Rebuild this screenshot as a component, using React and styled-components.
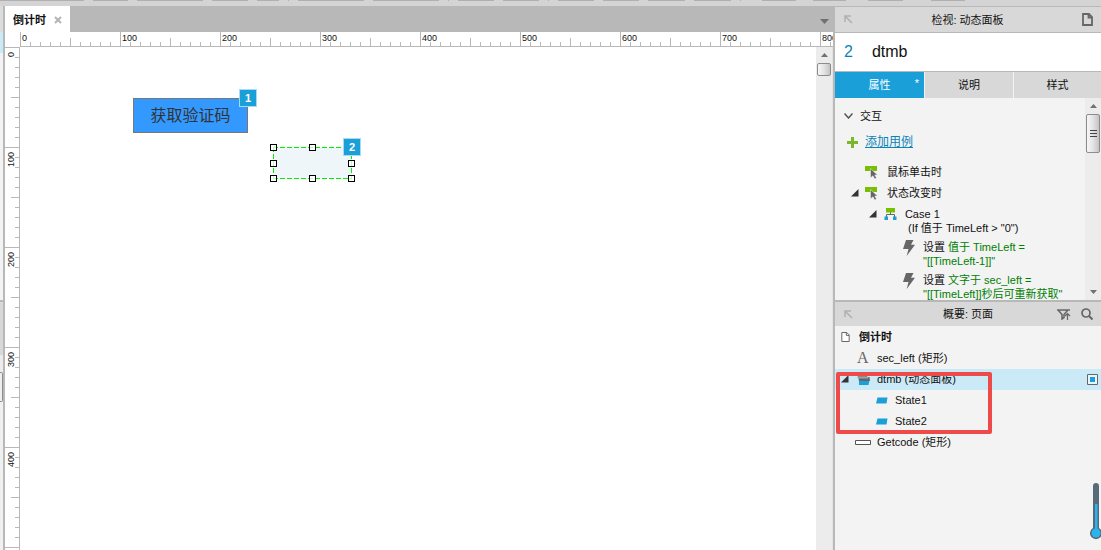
import React, { useEffect, useState } from 'react';
import styled, { createGlobalStyle, css } from 'styled-components';

const line = '#b8b8b8';
const blue = '#1b9fd9';

const Global = createGlobalStyle`
  * { box-sizing: border-box; }
  body {
    margin: 0;
    background: #f3f3f3;
    color: #111;
    font: 11px/14px "Liberation Sans", "Noto Sans CJK SC", sans-serif;
  }
  button, input { font: inherit; color: inherit; }
  svg { display: block; flex: none; }
`;

const Page = styled.div`
  display: flex;
  flex-direction: column;
  height: 100vh;
  overflow: hidden;
`;

const ToolStrip = styled.div`
  display: flex;
  flex: none;
  gap: 9px;
  height: 6px;
  background: #d4d4d4;
  overflow: hidden;
`;

const ToolEdge = styled.span`
  flex: none;
  width: ${(p) => p.$w}px;
  height: 1px;
  margin-left: ${(p) => p.$space || 0}px;
  background: #b0b0b0;
`;

const Workspace = styled.div`
  display: flex;
  flex: 1;
  min-height: 0;
`;

const LeftDock = styled.aside`
  display: flex;
  flex-direction: column;
  flex: none;
  width: 5px;
  border-right: 2px solid ${line};
  background: #f0f0f0;
`;

const DockPart = styled.div`
  flex: none;
  height: ${(p) => p.$h}px;
  background: ${(p) => p.$bg};
`;

const DockThumb = styled.div`
  height: 30px;
  border: 1px solid #8c8c8c;
  border-left: 0;
  border-radius: 0 2px 2px 0;
  background: #eee;
`;

const Editor = styled.main`
  display: flex;
  flex-direction: column;
  flex: 1;
  min-width: 0;
  background: #fff;
`;

const TabBar = styled.div`
  display: flex;
  justify-content: space-between;
  align-items: stretch;
  flex: none;
  height: 26px;
  background: ${line};
`;

const FileTab = styled.div`
  display: flex;
  align-items: center;
  gap: 8px;
  padding: 2px 8px 0 8px;
  background: #fff;
  font-weight: bold;
`;

const IconButton = styled.button`
  display: inline-flex;
  align-items: center;
  justify-content: center;
  padding: 0;
  border: 0;
  background: none;
  color: #666;
`;

const TabMenu = styled(IconButton)`
  width: 16px;
  padding-top: 4px;
  margin-right: 1px;
`;

const TopRuler = styled.div`
  display: flex;
  flex: none;
  height: 15px;
  margin-left: 15px;
  overflow: hidden;
  border-bottom: 1px solid ${line};
  background:
    linear-gradient(90deg, ${line} 1px, transparent 1px) 0 0 / 100px 14px repeat-x,
    linear-gradient(90deg, ${line} 1px, transparent 1px) 0 6px / 50px 8px repeat-x,
    linear-gradient(90deg, ${line} 1px, transparent 1px) 0 10px / 10px 4px repeat-x;
`;

const SideRuler = styled.div`
  display: flex;
  flex-direction: column;
  flex: none;
  width: 15px;
  overflow: hidden;
  border-right: 1px solid ${line};
  background:
    linear-gradient(${line} 1px, transparent 1px) 0 0 / 14px 100px repeat-y,
    linear-gradient(${line} 1px, transparent 1px) 6px 0 / 8px 50px repeat-y,
    linear-gradient(${line} 1px, transparent 1px) 10px 0 / 4px 10px repeat-y;
`;

const RulerMark = styled.span`
  flex: none;
  font-size: 9px;
  line-height: 10px;
  ${(p) => p.$side
    ? css`
        height: 100px;
        width: 10px;
        margin-left: 1px;
        padding-bottom: 5px;
        writing-mode: vertical-rl;
        transform: rotate(180deg);
        text-align: right;
      `
    : css`
        width: 100px;
        padding: 1px 0 0 2px;
      `}
`;

const CanvasRow = styled.div`
  display: flex;
  flex: 1;
  min-height: 0;
  border-right: 1px solid #e4e4e4;
`;

const Canvas = styled.div`
  position: relative;
  flex: 1;
  min-width: 0;
  overflow: hidden;
`;

const CodeButton = styled.button`
  position: absolute;
  left: 113px;
  top: 51px;
  width: 115px;
  height: 35px;
  padding: 1px 0 0;
  border: 1px solid #777;
  background: #3399ff;
  color: #333;
  font-size: 16px;
`;

const dash = '#00f000 0 5px, transparent 5px 7px';

const PanelWidget = styled.div`
  position: absolute;
  left: 253px;
  top: 100px;
  width: 79px;
  height: 32px;
  background:
    repeating-linear-gradient(90deg, ${dash}) 0 0 / 100% 1px no-repeat,
    repeating-linear-gradient(90deg, ${dash}) 0 100% / 100% 1px no-repeat,
    repeating-linear-gradient(${dash}) 0 0 / 1px 100% no-repeat,
    repeating-linear-gradient(${dash}) 100% 0 / 1px 100% no-repeat,
    #eff6f9;
`;

const Handles = styled.div`
  display: grid;
  grid-template-columns: repeat(3, 7px);
  justify-content: space-between;
  align-content: space-between;
  width: 85px;
  height: 38px;
  margin: -3px;
`;

const Handle = styled.i`
  height: 7px;
  visibility: ${(p) => (p.$hidden ? 'hidden' : 'visible')};
  border: 1px solid #000;
  background: rgba(255, 255, 255, 0.75);
`;

const Badge = styled.span`
  position: absolute;
  left: ${(p) => p.$x}px;
  top: ${(p) => p.$y}px;
  width: 18px;
  height: 18px;
  border: 1px solid #a5dcf2;
  background: ${blue};
  color: #fff;
  font-weight: bold;
  line-height: 16px;
  text-align: center;
`;

const ScrollTrack = styled.div`
  display: flex;
  flex-direction: column;
  align-items: center;
  flex: none;
  width: 16px;
  padding: 6px 0;
  background: #ececec;
  color: #777;
`;

const ScrollThumb = styled.div`
  display: flex;
  align-items: center;
  justify-content: center;
  width: 14px;
  height: ${(p) => p.$h}px;
  margin: 6px 0 auto;
  border: 1px solid #8c8c8c;
  border-radius: 2px;
  background: linear-gradient(90deg, #f6f6f6, #e6e6e6 45%, #c4c4c8);
`;

const Dock = styled.aside`
  display: flex;
  flex-direction: column;
  flex: none;
  width: 268px;
  border-left: 2px solid ${line};
  border-top: 1px solid ${line};
`;

const PaneHeader = styled.header`
  display: flex;
  align-items: center;
  flex: none;
  gap: 10px;
  height: ${(p) => p.$h}px;
  padding: 0 8px 0 9px;
  background: #d8d8d8;
  color: #b0b0b0;
`;

const PaneTitle = styled.h2`
  flex: 1;
  margin: 0;
  padding-left: ${(p) => p.$pad}px;
  color: #111;
  font-size: 11px;
  font-weight: normal;
  text-align: center;
`;

const NameRow = styled.label`
  display: flex;
  align-items: center;
  flex: none;
  gap: 19px;
  height: 40px;
  padding-left: 9px;
  border-top: 1px solid ${line};
  border-bottom: 1px solid ${line};
  background: #fff;
  color: #0a84b8;
  font-size: 16px;
`;

const NameInput = styled.input`
  flex: 1;
  min-width: 0;
  padding: 0;
  border: 0;
  outline: 0;
  background: none;
  color: #111;
`;

const Tabs = styled.div`
  display: grid;
  grid-template-columns: 89fr 88fr 87fr;
  gap: 1px;
  flex: none;
  height: 26px;
`;

const Tab = styled.button`
  position: relative;
  padding: 0;
  border: 0;
  background: ${(p) => (p.$on ? blue : '#d8d8d8')};
  color: ${(p) => (p.$on ? '#fff' : '#111')};
`;

const Star = styled.span`
  position: absolute;
  right: 5px;
  top: 4px;
`;

const InspectorBody = styled.div`
  display: flex;
  flex: none;
  height: 202px;
`;

const CaseList = styled.div`
  flex: 1;
  min-width: 0;
  overflow: hidden;
  padding-top: 8px;
`;

const Line = styled.div`
  display: flex;
  align-items: center;
  gap: ${(p) => p.$gap}px;
  height: 21px;
  padding: 0 0 1px ${(p) => p.$in}px;
  white-space: nowrap;
`;

const AddRow = styled(Line)`
  margin: 5px 0 9px;
`;

const AddLink = styled.a`
  color: #0a84b8;
  font-size: 12px;
  text-decoration: underline;
`;

const Condition = styled.div`
  padding-left: 73px;
  margin: -4px 0 5px;
`;

const Action = styled.div`
  display: flex;
  gap: 8px;
  padding-left: 68px;
  margin-bottom: 5px;
  white-space: nowrap;
`;

const ActionText = styled.div`
  color: #008000;
  b { color: #111; font-weight: normal; }
`;

const Tree = styled.ul`
  position: relative;
  flex: 1;
  margin: 0;
  padding: 1px 0 0;
  list-style: none;
`;

const TreeRow = styled.li`
  display: flex;
  align-items: center;
  gap: ${(p) => p.$gap || 7}px;
  height: 21px;
  padding: 0 3px 1px ${(p) => p.$in}px;
  background: ${(p) => (p.$on ? '#cbeaf7' : 'transparent')};
  font-weight: ${(p) => (p.$bold ? 'bold' : 'normal')};
`;

const LetterIcon = styled.span`
  width: 12px;
  color: #666;
  font: 16px/16px "Liberation Serif", serif;
`;

const Grow = styled.span`
  flex: 1;
`;

const Highlight = styled.div`
  position: absolute;
  left: 1px;
  top: 46px;
  width: 156px;
  height: 62px;
  border: 4px solid #ee4a4a;
  border-radius: 2px;
`;

const Thermo = styled.div`
  position: fixed;
  right: -1px;
  bottom: 10px;
`;

const ArrowNW = () => (
  <svg width="9" height="9" viewBox="0 0 9 9" fill="none" stroke="#b0b0b0" strokeWidth="1.5">
    <path d="M1 7V1h6M1.5 1.5L8 8" />
  </svg>
);
const PageIcon = ({ w = 11, h = 13, stroke = 1.8, fill = 'none' }) => (
  <svg width={w} height={h} viewBox="0 0 11 13" fill="none" stroke="#666" strokeWidth={stroke}>
    <path d="M1 1h6l3 3v8H1z" fill={fill} />
    <path d="M6.500 1v3.500H10" />
  </svg>
);
const Tri = ({ down, w = 7, h = 4 }) => (
  <svg width={w} height={h} viewBox="0 0 8 4" preserveAspectRatio="none" fill="#707070">
    <path d={down ? 'M0 0h8L4 4z' : 'M0 4h8L4 0z'} />
  </svg>
);
const Expanded = () => (
  <svg width="8" height="8" viewBox="0 0 8 8"><path d="M7.500 0v7.500H0z" fill="#333" /></svg>
);
const EventIcon = () => (
  <svg width="16" height="14" viewBox="0 0 16 14">
    <path d="M0 1h12v5H0z" fill="#76c000" />
    <path d="M5.500 3.500l7 6.500H9.800l1.700 3-1.800 1-1.700-3.200-2.500 2z" fill="#666" stroke="#f3f3f3" strokeWidth=".5" />
  </svg>
);
const CaseIcon = () => (
  <svg width="13" height="12" viewBox="0 0 13 12">
    <path d="M2.500 9V6.500h8V9M6.500 4v3" fill="none" stroke="#666" />
    <path d="M2 0h9v4.500H2z" fill="#76c000" />
    <path d="M0.500 8.500h3.500V12H.5zM9 8.500h3.500V12H9z" fill={blue} />
  </svg>
);
const Bolt = () => (
  <svg width="12" height="16" viewBox="0 0 12 16">
    <path d="M3 0h7.500L8 4.700h4L3.700 16 5.500 9H0z" fill="#666" />
  </svg>
);
const StackIcon = () => (
  <svg width="14" height="12" viewBox="0 0 14 12">
    <path d="M3 7h10.500l-1 5H3z" fill={blue} />
    <path d="M2 4h11.500l.5 4H3z" fill="#666" />
    <path d="M2.500.500H11l1 4.500H1z" fill="#8a8a8a" stroke="#cbeaf7" strokeWidth=".5" />
  </svg>
);
const StateIcon = () => (
  <svg width="12" height="7" viewBox="0 0 12 7"><path d="M1.500 0.500H11.500L10.500 6.500H0z" fill={blue} /></svg>
);
const Filter = () => (
  <svg width="14" height="11" viewBox="0 0 14 11" fill="none" stroke="#666" strokeWidth="1.500">
    <path d="M0 1h13M1.500 1.500l3.500 4V10l2-1.500V5.500L10.500 1.500" />
    <path d="M10.500 11V5M8 7l2.500-2.500L13 7" strokeWidth="1.200" />
  </svg>
);
const Search = () => (
  <svg width="12" height="12" viewBox="0 0 12 12" fill="none" stroke="#666">
    <circle cx="5" cy="5" r="4" strokeWidth="1.700" /><path d="M8 8l3.500 3.500" strokeWidth="2" />
  </svg>
);

// Each entry is the width of a toolbar button's edge and the extra space before it.
const tools = [
  [84], [35], [66], [36], [22], [1], [66], [66], [1], [36], [36], [1], [36], [36],
  [37], [37], [1], [34, 12], [33, 8], [35, 13], [34, 19],
];

const hundreds = (length) => Array.from({ length: Math.max(1, length) }, (_, i) => i * 100);

function useWindowSize() {
  const read = () => [window.innerWidth, window.innerHeight];
  const [size, setSize] = useState(read);
  useEffect(() => {
    const update = () => setSize(read());
    window.addEventListener('resize', update);
    return () => window.removeEventListener('resize', update);
  }, []);
  return size;
}

export default function App() {
  const [width, height] = useWindowSize();
  return (
    <Page>
      <Global />
      <ToolStrip>{tools.map(([w, space], i) => <ToolEdge key={i} $w={w} $space={space} />)}</ToolStrip>
      <Workspace>
        <LeftDock>
          <DockPart $h={26} $bg="#dcdcdc" />
          <DockPart $h={21} $bg="#cbeaf7" />
          <DockPart $h={247} $bg="#f3f3f3" />
          <DockPart $h={2} $bg={line} />
          <DockPart $h={53} $bg="#d8d8d8" />
          <DockPart $h={17} $bg="#ececec" />
          <DockThumb />
        </LeftDock>

        <Editor>
          <TabBar>
            <FileTab>
              倒计时
              <IconButton aria-label="关闭">
                <svg width="8" height="8" viewBox="0 0 8 8" stroke="#b4b4b4" strokeWidth="2">
                  <path d="M1 1l6 6M7 1L1 7" />
                </svg>
              </IconButton>
            </FileTab>
            <TabMenu aria-label="页面列表"><Tri down w={9} h={5} /></TabMenu>
          </TabBar>
          <TopRuler>
            {hundreds(Math.floor((width - 288) / 100) + 1).map((n) => <RulerMark key={n}>{n}</RulerMark>)}
          </TopRuler>
          <CanvasRow>
            <SideRuler>
              {hundreds(Math.floor((height - 47) / 100)).map((n) => <RulerMark key={n} $side>{n}</RulerMark>)}
            </SideRuler>
            <Canvas>
              <CodeButton>获取验证码</CodeButton>
              <Badge $x={219} $y={42}>1</Badge>
              <PanelWidget>
                <Handles>
                  {[...Array(9)].map((_, i) => <Handle key={i} $hidden={i === 4} />)}
                </Handles>
              </PanelWidget>
              <Badge $x={323} $y={91}>2</Badge>
            </Canvas>
            <ScrollTrack>
              <Tri />
              <ScrollThumb $h={13} />
            </ScrollTrack>
          </CanvasRow>
        </Editor>

        <Dock>
          <PaneHeader $h={25}>
            <ArrowNW />
            <PaneTitle $pad={0}>检视: 动态面板</PaneTitle>
            <IconButton aria-label="页面"><PageIcon /></IconButton>
          </PaneHeader>
          <NameRow>
            2
            <NameInput defaultValue="dtmb" />
          </NameRow>
          <Tabs role="tablist">
            <Tab role="tab" aria-selected="true" $on>属性<Star>*</Star></Tab>
            <Tab role="tab">说明</Tab>
            <Tab role="tab">样式</Tab>
          </Tabs>
          <InspectorBody>
            <CaseList>
              <Line $in={9} $gap={7}>
                <svg width="9" height="6" viewBox="0 0 9 6" fill="none" stroke="#555" strokeWidth="1.500">
                  <path d="M.5.500l4 4.500 4-4.500" />
                </svg>
                交互
              </Line>
              <AddRow $in={12} $gap={7}>
                <svg width="11" height="11" viewBox="0 0 11 11" stroke="#78b82a" strokeWidth="3">
                  <path d="M5.500 0v11M0 5.500h11" />
                </svg>
                <AddLink href="#add">添加用例</AddLink>
              </AddRow>
              <Line $in={30} $gap={6}><EventIcon />鼠标单击时</Line>
              <Line $in={16} $gap={6}><Expanded /><EventIcon />状态改变时</Line>
              <Line $in={34} $gap={7}><Expanded /><CaseIcon />&#8202;Case 1</Line>
              <Condition>(If 值于 TimeLeft &gt; "0")</Condition>
              <Action>
                <Bolt />
                <ActionText><b>设置</b> 值于 TimeLeft =<br />"[[TimeLeft-1]]"</ActionText>
              </Action>
              <Action>
                <Bolt />
                <ActionText><b>设置</b> 文字于 sec_left =<br />"[[TimeLeft]]秒后可重新获取"</ActionText>
              </Action>
            </CaseList>
            <ScrollTrack>
              <Tri />
              <ScrollThumb $h={39}>
                <svg width="7" height="9" viewBox="0 0 7 9" stroke="#444"><path d="M0 1.500h7M0 4.500h7M0 7.500h7" /></svg>
              </ScrollThumb>
              <Tri down />
            </ScrollTrack>
          </InspectorBody>
          <DockPart $h={2} $bg={line} />
          <PaneHeader $h={24}>
            <ArrowNW />
            <PaneTitle $pad={26}>概要: 页面</PaneTitle>
            <IconButton aria-label="筛选"><Filter /></IconButton>
            <IconButton aria-label="搜索"><Search /></IconButton>
          </PaneHeader>
          <Tree>
            <TreeRow $in={6} $gap={9} $bold><PageIcon w={9} h={12} stroke={1.2} fill="#fff" />倒计时</TreeRow>
            <TreeRow $in={22} $gap={8}><LetterIcon>A</LetterIcon>sec_left (矩形)</TreeRow>
            <TreeRow $in={6} $on>
              <Expanded /><StackIcon />
              <span>dtmb (动态面板)</span>
              <Grow />
              <svg width="11" height="11" viewBox="0 0 11 11">
                <path d="M.5.500h10v10H.5z" fill="#e8f5fb" stroke="#666" /><path d="M3 3h5v5H3z" fill={blue} />
              </svg>
            </TreeRow>
            <TreeRow $in={41}><StateIcon />State1</TreeRow>
            <TreeRow $in={41}><StateIcon />State2</TreeRow>
            <TreeRow $in={20} $gap={6}>
              <svg width="16" height="5" viewBox="0 0 16 5"><path d="M.5.500h15v4H.5z" fill="#fff" stroke="#555" /></svg>
              Getcode (矩形)
            </TreeRow>
            <Highlight />
          </Tree>
        </Dock>
      </Workspace>
      <Thermo>
        <svg width="12" height="57" viewBox="0 1 12 57">
          <path d="M3 4a3 3 0 0 1 6 0v42a6 6 0 1 1-6 0z" fill="#566a7a" />
          <path d="M5 22h2.500v26H5z" fill="#2ab4ee" />
          <circle cx="6" cy="51" r="4.500" fill="#2ab4ee" />
        </svg>
      </Thermo>
    </Page>
  );
}
